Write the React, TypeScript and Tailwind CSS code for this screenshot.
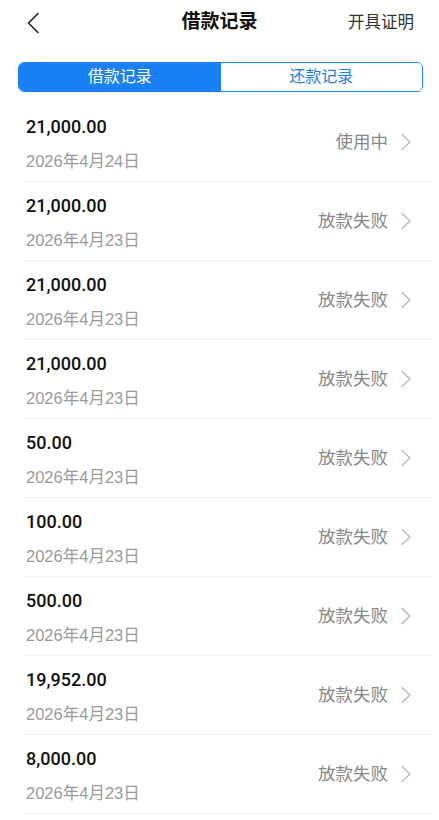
const records = [
  { amount: "21,000.00", date: "2026年4月24日", status: "使用中" },
  { amount: "21,000.00", date: "2026年4月23日", status: "放款失败" },
  { amount: "21,000.00", date: "2026年4月23日", status: "放款失败" },
  { amount: "21,000.00", date: "2026年4月23日", status: "放款失败" },
  { amount: "50.00", date: "2026年4月23日", status: "放款失败" },
  { amount: "100.00", date: "2026年4月23日", status: "放款失败" },
  { amount: "500.00", date: "2026年4月23日", status: "放款失败" },
  { amount: "19,952.00", date: "2026年4月23日", status: "放款失败" },
  { amount: "8,000.00", date: "2026年4月23日", status: "放款失败" },
];

function Chevron({ className }: { className?: string }) {
  return (
    <svg className={className} width="12" height="18" viewBox="0 0 12 18" fill="none">
      <path d="M2 1.5 L10 9 L2 16.5" stroke="currentColor" strokeWidth="1.4" strokeLinecap="round" strokeLinejoin="round" />
    </svg>
  );
}

export default function App() {
  return (
    <div
      className="w-[439px] h-[820px] bg-white overflow-hidden"
      style={{ fontFamily: '"Liberation Sans", "Noto Sans CJK SC", sans-serif' }}
    >
      {/* header */}
      <div className="relative h-[45px] flex items-center justify-between px-[26px]">
        <svg width="14" height="22" viewBox="0 0 14 22" fill="none" className="text-[#222] mt-[1px]">
          <path d="M12 1.5 L2.5 11 L12 20.5" stroke="currentColor" strokeWidth="1.6" strokeLinecap="round" strokeLinejoin="round" />
        </svg>
        <div className="absolute left-0 right-0 text-center text-[19px] font-bold text-[#111] pointer-events-none">
          借款记录
        </div>
        <div className="text-[16.5px] text-[#333] -mr-[1px]">开具证明</div>
      </div>

      {/* tabs */}
      <div className="mt-[17px] mx-[18px] w-[405px] h-[30px] flex rounded-[6px] border border-[#1a80f5] overflow-hidden">
        <div className="flex-1 flex items-center justify-center bg-[#1a80f5] text-white text-[16px]">借款记录</div>
        <div className="flex-1 flex items-center justify-center bg-white text-[#1a80f5] text-[16px]">还款记录</div>
      </div>

      {/* list */}
      <div className="mt-[11px] pl-[24px] pr-[7px]">
        {records.map((r, i) => (
          <div key={i} className="h-[79px] border-b border-[#f0f0f0] flex pl-[2px]">
            <div className="flex-1 flex flex-col pt-[13px]">
              <div
                className="text-[18px] leading-[22px] font-medium text-[#111]"
                style={{ fontFamily: 'Roboto, "Noto Sans CJK SC", sans-serif' }}
              >
                {r.amount}
              </div>
              <div className="mt-[12px] text-[16.5px] leading-[22px] text-[#9a9a9a]">{r.date}</div>
            </div>
            <div className="flex items-center mr-[20px]">
              <span className="text-[17.5px] text-[#888]">{r.status}</span>
              <Chevron className="ml-[12px] text-[#b8b8b8]" />
            </div>
          </div>
        ))}
      </div>
    </div>
  );
}
